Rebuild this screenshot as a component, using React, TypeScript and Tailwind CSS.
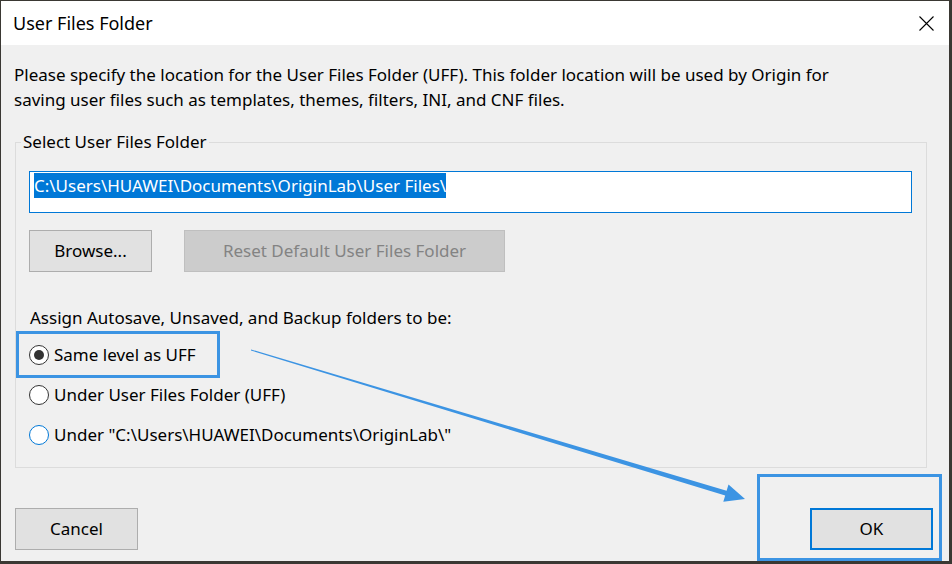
const font = { fontFamily: '"Noto Sans", "Open Sans", sans-serif' };

function Radio({ checked, focus, label }: { checked?: boolean; focus?: boolean; label: string }) {
  return (
    <div className="flex h-[40px] items-center">
      <span
        className={`flex h-[20px] w-[20px] items-center justify-center rounded-full border bg-white ${
          focus ? 'border-[#0078d7]' : 'border-[#333333]'
        }`}
      >
        {checked && <span className="h-[10px] w-[10px] rounded-full bg-[#333333]" />}
      </span>
      <span className="ml-[5px] text-[17px] leading-[24px] text-black">{label}</span>
    </div>
  );
}

export default function App() {
  return (
    <div className="relative h-[564px] w-[952px] overflow-hidden bg-[#3a3833] pl-[1px] pt-[1px]" style={font}>
      <div className="flex h-[560px] w-[948px] flex-col bg-[#f0f0f0]">
        {/* title bar */}
        <div className="flex h-[44px] items-center justify-between bg-white pl-[12px] pr-[15px]">
          <span className="text-[18px] leading-[24px] text-black">User Files Folder</span>
          <svg width="15" height="15" viewBox="0 0 15 15" className="text-black">
            <path d="M0.5 0.5 L14.5 14.5 M14.5 0.5 L0.5 14.5" stroke="currentColor" strokeWidth="1.1" fill="none" />
          </svg>
        </div>

        <p className="mt-[17px] pl-[13px] text-[17px] leading-[25px] text-black">
          Please specify the location for the User Files Folder (UFF). This folder location will be used by Origin for
          <br />
          saving user files such as templates, themes, filters, INI, and CNF files.
        </p>

        <fieldset className="ml-[14px] mt-[20px] w-[912px] border border-[#dcdcdc] px-[13px] pb-[12px]">
          <legend className="-ml-[8px] px-[2px] text-[17px] leading-[20px] text-black">Select User Files Folder</legend>

          <div className="mt-[19px] flex h-[42px] w-[883px] items-start border border-[#0078d7] bg-white pl-[4px] pt-[1px]">
            <span className="bg-[#0078d7] text-[17px] leading-[25px] text-white">
              C:\Users\HUAWEI\Documents\OriginLab\User Files\
            </span>
          </div>

          <div className="mt-[17px] flex gap-[32px]">
            <button className="h-[42px] w-[123px] border border-[#adadad] bg-[#e1e1e1] text-[17px] text-black">
              Browse...
            </button>
            <button className="h-[42px] w-[321px] border border-[#bfbfbf] bg-[#cccccc] text-[17px] text-[#838383]">
              Reset Default User Files Folder
            </button>
          </div>

          <div className="mt-[34px] pl-[1px] text-[17px] leading-[24px] text-black">
            Assign Autosave, Unsaved, and Backup folders to be:
          </div>

          <div className="mt-[5px] flex flex-col">
            <Radio checked label="Same level as UFF" />
            <Radio label="Under User Files Folder (UFF)" />
            <Radio focus label={'Under "C:\\Users\\HUAWEI\\Documents\\OriginLab\\"'} />
          </div>
        </fieldset>

        <div className="mt-[40px] flex justify-between pl-[14px] pr-[16px]">
          <button className="h-[42px] w-[123px] border border-[#adadad] bg-[#e1e1e1] text-[17px] text-black">
            Cancel
          </button>
          <button className="h-[42px] w-[123px] border-2 border-[#0078d7] bg-[#e1e1e1] text-[17px] text-black">
            OK
          </button>
        </div>
      </div>

      {/* annotations */}
      <div className="absolute left-[16px] top-[331px] h-[47px] w-[204px] border-[3px] border-[#3c94e3]" />
      <div className="absolute left-[757px] top-[474px] h-[87px] w-[185px] border-[3px] border-[#3c94e3]" />
      <svg className="pointer-events-none absolute left-0 top-0" width="952" height="564" viewBox="0 0 952 564">
        <polygon
          points="251.1,349.5 726.6,490.8 728.5,484.6 745,499 723.3,501.8 725.2,495.6 250.9,350.5"
          fill="#3c94e3"
        />
      </svg>
    </div>
  );
}
